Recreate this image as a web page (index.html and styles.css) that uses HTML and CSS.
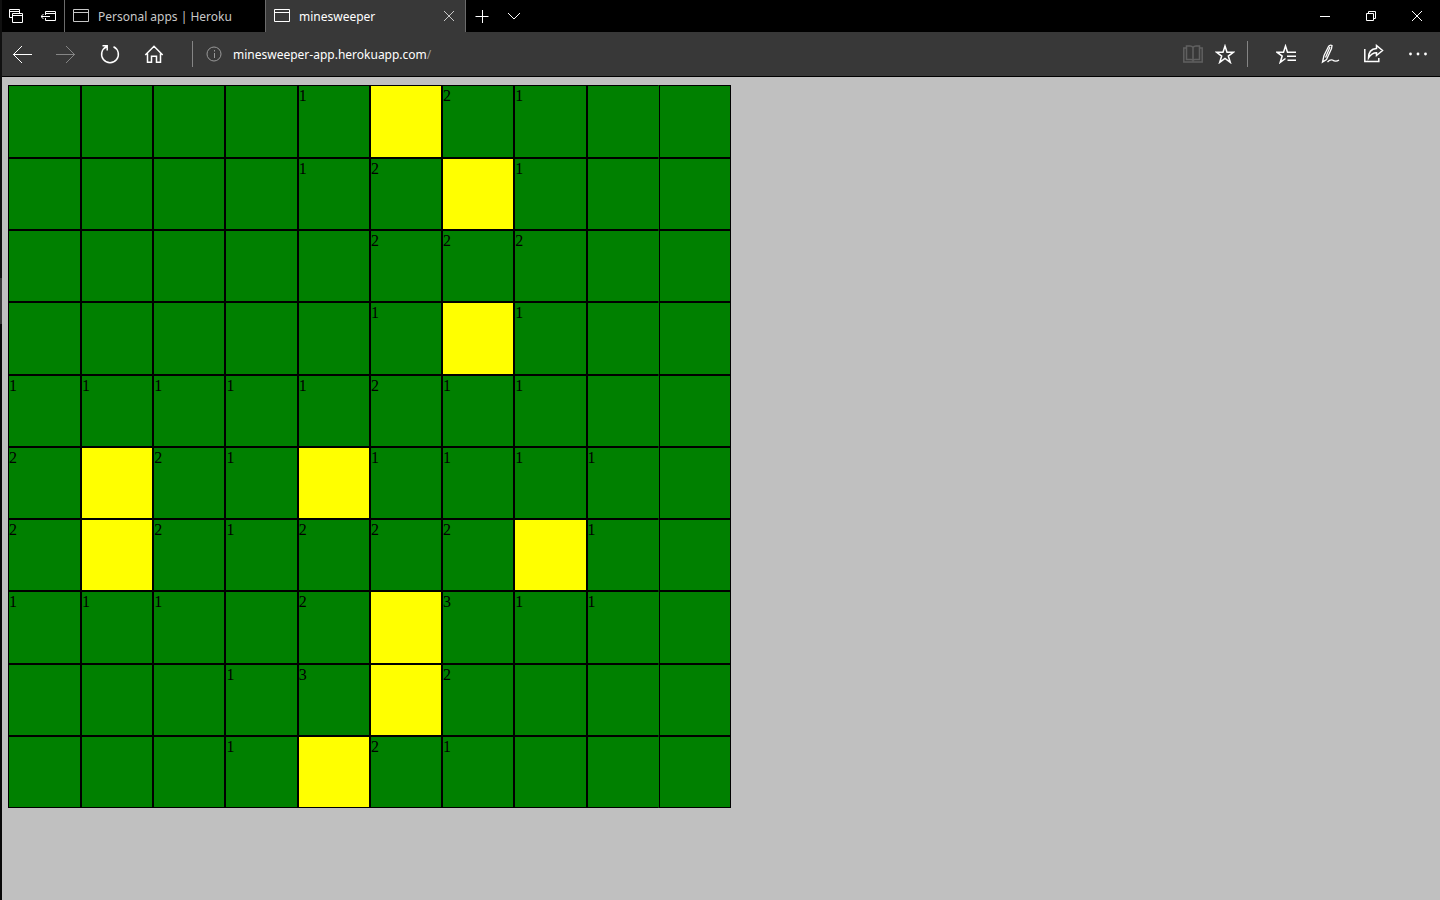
FILE: index.html
```html
<!DOCTYPE html>
<html lang="en">
<head>
<meta charset="utf-8">
<title>minesweeper</title>
<link rel="stylesheet" href="styles.css">
</head>
<body>
<div class="desktop-edge"></div>
<div class="browser">
  <header class="tabbar">
    <div class="tab-tools">
      <button class="tab-tool" aria-label="Tabs you've set aside"><svg width="16" height="16" viewBox="0 0 16 16"><path d="M3 9.500H.5v-8h10V5M.5 3.500h10M3.500 5.500h10v9h-10zM3.500 7.500h10"/></svg></button>
      <button class="tab-tool" aria-label="Set these tabs aside"><svg width="16" height="16" viewBox="0 0 16 16"><path d="M4.500 7V3.500h10v9h-10V10M4.500 5.500h10M0 8.500h9M2.500 6L0 8.500 2.500 11"/></svg></button>
    </div>
    <div class="tab">
      <svg width="16" height="16" viewBox="0 0 16 16"><path d="M.5 1.500h15v12H.5zM.5 4.500h15"/></svg>
      <span class="tab-title">Personal apps | Heroku</span>
    </div>
    <div class="tab tab-active">
      <svg width="16" height="16" viewBox="0 0 16 16"><path d="M.5 1.500h15v12H.5zM.5 4.500h15"/></svg>
      <span class="tab-title">minesweeper</span>
      <button class="tab-close" aria-label="Close tab"><svg width="12" height="12" viewBox="0 0 12 12"><path d="M1 1l10 10M11 1L1 11"/></svg></button>
    </div>
    <button class="tab-action" aria-label="New tab"><svg width="14" height="14" viewBox="0 0 14 14"><path d="M.5 7.500h13M7.500 1v13"/></svg></button>
    <button class="tab-action" aria-label="Show tab previews"><svg width="14" height="14" viewBox="0 0 14 14"><path d="M1 4l6 6 6-6"/></svg></button>
    <div class="window-controls">
      <button class="window-control" aria-label="Minimize"><svg width="12" height="12" viewBox="0 0 12 12"><path d="M1 6.500h10"/></svg></button>
      <button class="window-control" aria-label="Restore"><svg width="12" height="12" viewBox="0 0 12 12"><path d="M1.500 3.500h7v7h-7zM3.500 3V1.500h7v7H9"/></svg></button>
      <button class="window-control" aria-label="Close"><svg width="12" height="12" viewBox="0 0 12 12"><path d="M1 1l10 10M11 1L1 11"/></svg></button>
    </div>
  </header>
  <nav class="toolbar">
    <div class="nav-buttons">
      <button class="nav-button" aria-label="Back"><svg width="20" height="20" viewBox="0 0 20 20"><path d="M1 10.500h19M10 2l-8.500 8.500L10 19"/></svg></button>
      <button class="nav-button" aria-label="Forward" disabled><svg width="20" height="20" viewBox="0 0 20 20"><path d="M0 10.500h19M10 2l8.500 8.500L10 19"/></svg></button>
      <button class="nav-button" aria-label="Refresh"><svg width="20" height="20" viewBox="0 0 20 20"><path class="bold" d="M13.500 2.700A8.400 8.400 0 1 1 6.500 2.700M2.500 1.800h4.700v4.700"/></svg></button>
      <button class="nav-button" aria-label="Home"><svg width="20" height="20" viewBox="0 0 20 20"><path class="bold" d="M1.300 11L10 2.300l8.700 8.700M3.500 9.500v8.700h4v-6h5v6h4V9.500"/></svg></button>
    </div>
    <span class="divider"></span>
    <div class="address">
      <svg width="16" height="16" viewBox="0 0 16 16"><circle cx="8" cy="8" r="7"/><path d="M8.500 7v5M8.500 4v1.500"/></svg>
      <span class="address-text"><input class="address-input" type="text" aria-label="Address" value="minesweeper-app.herokuapp.com" spellcheck="false"><span class="address-path">/</span></span>
    </div>
    <button class="page-action" aria-label="Reading view" disabled><svg width="20" height="20" viewBox="0 0 20 20"><path class="bold" d="M10 3v13M10 3.500Q9 2 7 2H3.500v13.500H8q1.500 0 2 1 .5-1 2-1h4.500V2H13q-2 0-3 1.500M3 4H.8v14h18.400V4H17"/></svg></button>
    <button class="page-action" aria-label="Add to favorites"><svg width="20" height="20" viewBox="0 0 20 20"><path class="bold" d="M10 2l2 6.200h6.600l-5.300 3.900 2 6.300L10 14.500l-5.300 3.900 2-6.300L1.400 8.200H8z"/></svg></button>
    <span class="divider"></span>
    <div class="menu-buttons">
      <button class="menu-button" aria-label="Hub"><svg width="20" height="20" viewBox="0 0 20 20"><path class="bold" d="M9.500 14.500l-5.300 3.900 2-6.300L.9 8.200h6.600l2-6.200 2 6.200H20M11 12.200h9M11.500 16.200H20"/></svg></button>
      <button class="menu-button" aria-label="Make a web note"><svg width="20" height="20" viewBox="0 0 20 20"><path d="M2.500 18L4 11.500 8.500 2.500q1.500-2 3.500-1l-.5 3L6.500 15.500zM10 3L5.500 13.500M7.500 18q2.500-2.800 5-2 1.500 1.200 3.300 1.200 1.700 0 3.200-1.200" stroke-width="1.300"/></svg></button>
      <button class="menu-button" aria-label="Share"><svg width="20" height="20" viewBox="0 0 20 20"><path class="bold" d="M.8 5v12.500h14V14M4.500 14Q4.500 5 12.500 4.500V1.500L18.500 6.500l-6 5V8.700Q7.500 8.700 4.500 14z"/></svg></button>
      <button class="menu-button" aria-label="Settings and more"><svg width="20" height="20" viewBox="0 0 20 20"><g class="dots"><circle cx="2.500" cy="10" r="1.400"/><circle cx="10" cy="10" r="1.400"/><circle cx="17.500" cy="10" r="1.400"/></g></svg></button>
    </div>
  </nav>
  <main class="page">
    <div class="board" id="board"></div>
  </main>
</div>
<script src="board.js"></script>
</body>
</html>
```
FILE: styles.css
```css
* {
  box-sizing: border-box;
}

body {
  margin: 0;
  min-height: 100vh;
  display: flex;
  background: #c0c0c0;
  font-family: "Noto Sans", "Open Sans", sans-serif;
  font-size: 12px;
  color: #fff;
}

button {
  display: flex;
  align-items: center;
  justify-content: center;
  margin: 0;
  padding: 0;
  border: 0;
  background: none;
  color: inherit;
  font: inherit;
}

svg {
  flex: none;
  fill: none;
  stroke: currentColor;
}

.bold {
  stroke-width: 1.5;
}

.dots {
  fill: currentColor;
  stroke: none;
}

.desktop-edge {
  width: 2px;
  background: linear-gradient(#101010 278px, #383838 278px, #383838 324px, #080808 324px);
}

.browser {
  flex: 1;
  display: flex;
  flex-direction: column;
}

.tabbar {
  display: flex;
  height: 32px;
  background: #000;
}

.tab-tools {
  display: flex;
  gap: 2px;
}

.tab-tool {
  width: 30px;
}

.tab {
  display: flex;
  align-items: center;
  gap: 9px;
  width: 201px;
  padding: 0 8px;
  border-left: 1px solid #6b6b6b;
  color: #c8c8c8;
}

.tab-active {
  border-right: 1px solid #6b6b6b;
  background: #383838;
  color: #fff;
}

.tab-title {
  flex: 1;
  white-space: nowrap;
}

.tab-close {
  width: 16px;
  height: 16px;
  color: #c8c8c8;
}

.tab-action {
  width: 32px;
}

.window-controls {
  display: flex;
  margin-left: auto;
}

.window-control {
  width: 46px;
}

.toolbar {
  display: flex;
  align-items: center;
  height: 45px;
  background: #383838;
  border-bottom: 1px solid #000;
}

.nav-buttons {
  display: flex;
  gap: 4px;
  margin-right: 18px;
}

.nav-button {
  width: 40px;
  height: 44px;
}

.nav-button:disabled {
  color: #858585;
}

.divider {
  width: 1px;
  height: 26px;
  background: #858585;
}

.address {
  flex: 1;
  display: flex;
  align-items: center;
  gap: 11px;
  padding-left: 13px;
  color: #999;
}

.address-text {
  display: flex;
  align-items: center;
}

.address-input {
  field-sizing: content;
  padding: 0;
  border: 0;
  outline: 0;
  background: none;
  color: #fff;
  font: inherit;
}

.page-action {
  width: 32px;
  height: 44px;
}

.page-action:disabled {
  color: #606060;
}

.page-action + .divider {
  margin: 0 16px 0 6px;
}

.menu-buttons {
  display: flex;
}

.menu-button {
  width: 44px;
  height: 44px;
}

.page {
  padding: 8px 6px;
}

.board {
  display: grid;
  grid-template-columns: 73px repeat(9, 1fr);
  grid-template-rows: 73px repeat(9, 1fr);
  width: 723px;
  aspect-ratio: 1;
}

.cell {
  align-items: flex-start;
  justify-content: flex-start;
  border: 1px solid #000;
  background: #008000;
  color: #000;
  font-family: "Liberation Serif", serif;
  font-size: 16px;
  line-height: 20px;
}

.cell:nth-child(10n + 9) {
  border-right-color: #008000;
}

.mine {
  background: #ff0;
}
```
FILE: board.js
```js
// "." is an empty square, "*" a mine, a digit the number of mines nearby.
const rows = [
  "....1*21..",
  "....12*1..",
  ".....222..",
  ".....1*1..",
  "11111211..",
  "2*21*1111.",
  "2*21222*1.",
  "111.2*311.",
  "...13*2...",
  "...1*21..."
];

const board = document.getElementById("board");

rows.forEach((row, y) => {
  [...row].forEach((value, x) => {
    const cell = document.createElement("button");
    cell.className = value === "*" ? "cell mine" : "cell";
    cell.setAttribute("aria-label", `Row ${y + 1}, column ${x + 1}`);
    if (/\d/.test(value)) cell.textContent = value;
    board.append(cell);
  });
});
```
